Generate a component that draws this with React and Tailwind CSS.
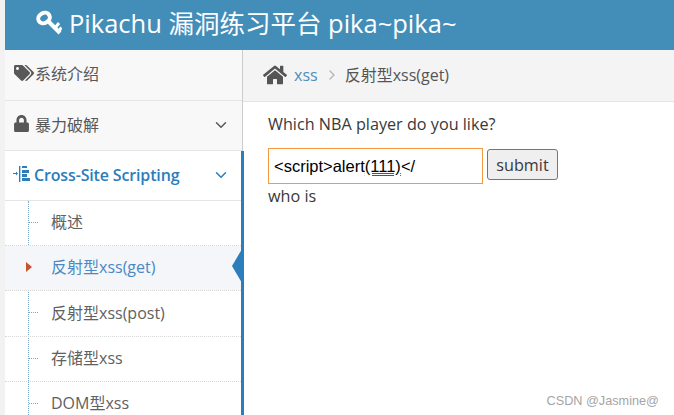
import React from 'react';
import { ChevronDown, ChevronRight } from 'lucide-react';
import { FaLock, FaHome, FaTags } from 'react-icons/fa';

const font = "font-['Open_Sans','Noto_Sans_CJK_SC',sans-serif]";

function SubItem({ label, active, tall }) {
  return (
    <div className={`relative ${tall ? 'h-[46px]' : 'h-[45px]'} flex items-center pl-[46px] pb-[2px] text-[16px] border-b border-dotted border-[#d8d8d8] ${active ? 'bg-[#f4f6f9] text-[#4b88c5]' : 'text-[#616161]'}`}>
      {active ? (
        <span className="absolute left-[21px] top-[16px] border-y-[5px] border-l-[6px] border-y-transparent border-l-[#c4552d]" />
      ) : (
        <span className="absolute left-[24px] top-[21px] w-[9px] border-t border-dotted border-[#7fa8cc]" />
      )}
      {active && (
        <span className="absolute right-[-1px] top-[3px] border-y-[17px] border-r-[10px] border-y-transparent border-r-[#2b7dbc]" />
      )}
      {label}
    </div>
  );
}

function KeyIcon() {
  return (
    <svg viewBox="0 0 27 26" className="w-[27px] h-[26px] mr-[7px] shrink-0" fill="none" stroke="currentColor">
      <ellipse cx="9" cy="8" rx="6" ry="5" strokeWidth="4" transform="rotate(-30 9 8)" />
      <path d="M14 12 L25 23" strokeWidth="4" />
      <path d="M20 18 L24 13 M23.5 21.5 L26.5 17.5" strokeWidth="3" />
    </svg>
  );
}

function ListIcon() {
  return (
    <svg viewBox="0 0 17 16" className="w-[17px] h-[16px] mr-[4px] shrink-0 -mt-[1px]">
      <path d="M0 7.5h4" stroke="#2b7dbc" strokeWidth="1" />
      <path d="M3 5.5l2 2-2 2" fill="#2b7dbc" />
      <rect x="6" y="0" width="1" height="16" fill="#2b7dbc" />
      <rect x="7" y="0" width="1" height="16" fill="#a9cbe6" />
      <rect x="9" y="0" width="5" height="2" fill="#2b7dbc" />
      <rect x="9" y="4" width="7" height="3" fill="#2b7dbc" />
      <rect x="9" y="8" width="5" height="3" fill="#2b7dbc" />
      <rect x="9" y="12" width="8" height="3" fill="#2b7dbc" />
    </svg>
  );
}

export default function App() {
  return (
    <div className={`relative h-[415px] w-[674px] overflow-hidden bg-white ${font}`}>
      <div className="flex h-full pl-[5px] bg-[#f2f2f2]">
        <div className="flex-1 flex flex-col bg-white min-w-0">
          <div className="h-[50px] shrink-0 bg-[#438eb9] flex items-center pl-[30px] pb-[4px] text-white text-[25.5px]">
            <KeyIcon />
            <span>Pikachu 漏洞练习平台 pika~pika~</span>
          </div>
          <div className="flex flex-1 min-h-0">
            <div className="w-[238px] shrink-0 bg-[#f8f8f8] border-r border-[#cccccc] flex flex-col">
              <div className="h-[51px] shrink-0 flex items-center pl-[9px] pb-[2px] text-[16px] text-[#585858] border-b border-[#e5e5e5]">
                <FaTags className="w-[20px] h-[18px] mr-[1px] -mt-[2px]" />
                <span>系统介绍</span>
              </div>
              <div className="h-[50px] shrink-0 flex items-center pl-[9px] pr-[12px] pb-[2px] text-[16px] text-[#585858] border-b border-[#e5e5e5]">
                <FaLock className="w-[15px] h-[17px] mr-[6px] -mt-[2px]" />
                <span className="flex-1">暴力破解</span>
                <ChevronDown className="w-[18px] h-[18px] ml-auto" />
              </div>
              <div className="relative flex-1 bg-white border-r-[3px] border-[#2b7dbc] -mr-[2px]">
                <span className="absolute left-[23px] top-[50px] bottom-0 border-l border-dotted border-[#7fa8cc] z-0" />
                <div className="h-[50px] flex items-center pl-[8px] pr-[11px] pb-[2px] text-[16px] font-semibold text-[#2b7dbc] border-b border-[#e5e5e5]">
                  <ListIcon />
                  <span className="flex-1 tracking-[-0.15px]">Cross-Site Scripting</span>
                  <ChevronDown className="w-[18px] h-[18px]" />
                </div>
                <SubItem label="概述" />
                <SubItem label="反射型xss(get)" active />
                <SubItem label="反射型xss(post)" tall />
                <SubItem label="存储型xss" />
                <SubItem label="DOM型xss" />
              </div>
            </div>
            <div className="flex-1 min-w-0">
              <div className="h-[52px] bg-[#f4f4f4] border-b border-[#e5e5e5] flex items-center pl-[20px] pb-[2px] text-[16px] text-[#555555]">
                <FaHome className="w-[24px] h-[24px] mr-[7px] text-[#555555]" />
                <span className="text-[#4c8fbd]">xss</span>
                <ChevronRight className="w-[16px] h-[16px] ml-[6px] mr-[5px] text-[#b2b6bf]" />
                <span>反射型xss(get)</span>
              </div>
              <div className="pl-[25px] pt-[11px] text-[#393939] text-[16.2px] leading-[22px]">
                <p>Which NBA player do you like?</p>
                <div className="flex items-start mt-[13px] h-[36px]">
                  <div className="w-[215px] h-[36px] border border-[#f59942] flex items-center pl-[5px] pb-[1px] font-['Liberation_Sans',sans-serif] text-[16.5px] text-black">
                    <span>&lt;script&gt;alert</span>
                    <span className="underline decoration-double decoration-[#2a4fd0]">(111)</span>
                    <span>&lt;/</span>
                  </div>
                  <button className="ml-[4px] mt-[1px] w-[71px] h-[31px] border border-[#767676] rounded-[3px] bg-[#efefef] text-[#393939] text-[16.2px]">submit</button>
                </div>
                <p className="mt-[1px]">who is</p>
              </div>
            </div>
          </div>
        </div>
      </div>
      <span className="absolute right-[15px] top-[392px] text-[12.7px] text-[#a5a5a5] font-['Liberation_Sans',sans-serif]">CSDN @Jasmine@</span>
    </div>
  );
}
